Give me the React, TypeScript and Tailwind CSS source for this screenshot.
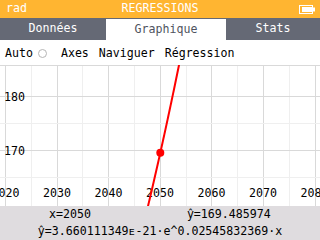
const FONT = { fontFamily: '"DejaVu Sans Mono", "Liberation Mono", monospace' };

// graph scale
const X0 = 160.3; // px of year 2050
const XS = 5.156; // px per year
const Y170 = 150 - 65; // svg y of 170
const YS = 5.35; // px per unit

const px = (year: number) => X0 + (year - 2050) * XS;
const py = (v: number) => Y170 - (v - 170) * YS;

function curvePoints() {
  const pts: string[] = [];
  for (let yr = 2046; yr <= 2055; yr += 0.1) {
    const v = 169.485974 * Math.exp(0.02545832369 * (yr - 2050));
    pts.push(`${px(yr).toFixed(2)},${py(v).toFixed(2)}`);
  }
  return pts.join(' ');
}

function Graph() {
  const vLines = [5, 31, 57, 82, 108, 134, 160, 186, 211, 237, 263, 289, 315];
  const xLabels = [
    { t: '2020', x: 5.5 },
    { t: '2030', x: 57 },
    { t: '2040', x: 108.5 },
    { t: '2050', x: 160 },
    { t: '2060', x: 211.5 },
    { t: '2070', x: 263 },
    { t: '2080', x: 314.5 },
  ];
  return (
    <svg width="320" height="141" viewBox="0 0 320 141" className="block">
      {vLines.map((x, i) => (
        <line key={x} x1={x + 0.5} y1={1} x2={x + 0.5} y2={141} stroke={i % 2 === 0 ? '#d9d9d9' : '#efefef'} strokeWidth="1" />
      ))}
      <line x1="0" y1="0.5" x2="320" y2="0.5" stroke="#d9d9d9" />
      <line x1="0" y1="31.5" x2="320" y2="31.5" stroke="#d9d9d9" />
      <line x1="0" y1="58.5" x2="320" y2="58.5" stroke="#efefef" />
      <line x1="0" y1="85.5" x2="320" y2="85.5" stroke="#d9d9d9" />
      <line x1="0" y1="112.5" x2="320" y2="112.5" stroke="#efefef" />
      <g fontSize="11.6" fill="#000" style={FONT}>
        <text x="4" y="35.5">180</text>
        <text x="4" y="89.5">170</text>
        {xLabels.map((l) => (
          <text key={l.t} x={l.x} y="132" textAnchor="middle">
            {l.t}
          </text>
        ))}
      </g>
      <polyline points={curvePoints()} fill="none" stroke="#ff0000" strokeWidth="2" />
      <circle cx={160.3} cy={py(169.485974)} r="4" fill="#ff0000" />
    </svg>
  );
}

export default function App() {
  return (
    <div className="w-[320px] h-[240px] flex flex-col bg-white overflow-hidden text-[11.6px] leading-none" style={FONT}>
      <div className="h-[18px] bg-[#ffb531] grid grid-cols-[1fr_auto_1fr] items-center text-white">
        <span className="pl-[6px]">rad</span>
        <span>REGRESSIONS</span>
        <div className="flex justify-end pr-[5px]">
          <svg width="16" height="9" viewBox="0 0 16 9">
            <rect x="0.5" y="0.5" width="13" height="8" fill="none" stroke="#fff" />
            <rect x="3" y="2" width="10" height="5" fill="#fff" />
            <rect x="14" y="2.5" width="2" height="4" fill="#fff" />
          </svg>
        </div>
      </div>
      <div className="h-[22px] bg-[#656975] flex">
        <div className="w-[106px] flex items-center justify-center text-white">Données</div>
        <div className="w-[120px] mt-px bg-white flex items-center justify-center text-[#4f5360]">Graphique</div>
        <div className="flex-1 flex items-center justify-center text-white">Stats</div>
      </div>
      <div className="h-[25px] flex items-center pl-[5px] pt-[2px] text-black">
        <span>Auto</span>
        <span className="ml-[5px] w-[9px] h-[9px] rounded-full border border-[#b5b5b5]" />
        <span className="ml-[14px]">Axes</span>
        <span className="ml-[10px]">Naviguer</span>
        <span className="ml-[10px]">Régression</span>
      </div>
      <Graph />
      <div className="flex-1 bg-[#dfdcdf] flex flex-col text-black">
        <div className="h-[17px] flex items-center">
          <span className="ml-[49px]">x=2050</span>
          <span className="ml-[96px]">ŷ=169.485974</span>
        </div>
        <div className="h-[17px] flex items-center justify-center">ŷ=3.660111349ᴇ-21·e^0.02545832369·x</div>
      </div>
    </div>
  );
}
